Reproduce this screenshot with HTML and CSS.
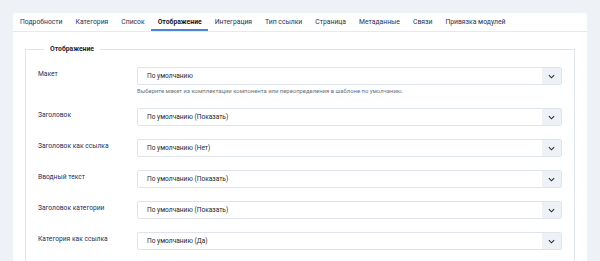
FILE: index.html
```html
<!DOCTYPE html>
<html lang="ru">
<head>
<meta charset="utf-8">
<title>Отображение</title>
<link rel="stylesheet" href="styles.css">
</head>
<body>
<div class="card">
  <nav class="tabs">
    <span class="tab">Подробности</span>
    <span class="tab">Категория</span>
    <span class="tab">Список</span>
    <span class="tab active">Отображение</span>
    <span class="tab">Интеграция</span>
    <span class="tab">Тип ссылки</span>
    <span class="tab">Страница</span>
    <span class="tab">Метаданные</span>
    <span class="tab">Связи</span>
    <span class="tab">Привязка модулей</span>
  </nav>
  <div class="card-body">
    <fieldset class="group">
      <legend class="legend">Отображение</legend>
      <div class="row">
        <div class="label">Макет</div>
        <div class="control">
          <div class="select"><span class="value">По умолчанию</span><span class="btn"><svg viewBox="0 0 8 5" width="7" height="5"><path d="M1 1 L4 4 L7 1" fill="none" stroke="#2b2f36" stroke-width="1.3"/></svg></span></div>
          <div class="help">Выберите макет из комплектации компонента или переопределения в шаблоне по умолчанию.</div>
        </div>
      </div>
      <div class="row">
        <div class="label">Заголовок</div>
        <div class="control">
          <div class="select"><span class="value">По умолчанию (Показать)</span><span class="btn"><svg viewBox="0 0 8 5" width="7" height="5"><path d="M1 1 L4 4 L7 1" fill="none" stroke="#2b2f36" stroke-width="1.3"/></svg></span></div>
        </div>
      </div>
      <div class="row">
        <div class="label">Заголовок как ссылка</div>
        <div class="control">
          <div class="select"><span class="value">По умолчанию (Нет)</span><span class="btn"><svg viewBox="0 0 8 5" width="7" height="5"><path d="M1 1 L4 4 L7 1" fill="none" stroke="#2b2f36" stroke-width="1.3"/></svg></span></div>
        </div>
      </div>
      <div class="row">
        <div class="label">Вводный текст</div>
        <div class="control">
          <div class="select"><span class="value">По умолчанию (Показать)</span><span class="btn"><svg viewBox="0 0 8 5" width="7" height="5"><path d="M1 1 L4 4 L7 1" fill="none" stroke="#2b2f36" stroke-width="1.3"/></svg></span></div>
        </div>
      </div>
      <div class="row">
        <div class="label">Заголовок категории</div>
        <div class="control">
          <div class="select"><span class="value">По умолчанию (Показать)</span><span class="btn"><svg viewBox="0 0 8 5" width="7" height="5"><path d="M1 1 L4 4 L7 1" fill="none" stroke="#2b2f36" stroke-width="1.3"/></svg></span></div>
        </div>
      </div>
      <div class="row">
        <div class="label">Категория как ссылка</div>
        <div class="control">
          <div class="select"><span class="value">По умолчанию (Да)</span><span class="btn"><svg viewBox="0 0 8 5" width="7" height="5"><path d="M1 1 L4 4 L7 1" fill="none" stroke="#2b2f36" stroke-width="1.3"/></svg></span></div>
        </div>
      </div>
    </fieldset>
  </div>
</div>
</body>
</html>
```
FILE: styles.css
```css
html, body {
  margin: 0;
  padding: 0;
}
body {
  background: #eef2f7;
  font-family: Roboto, "Noto Sans", sans-serif;
  padding: 13px 13px 0 13px;
  height: 261px;
  box-sizing: border-box;
  overflow: hidden;
}
.card {
  background: #fff;
  width: 574px;
  border-radius: 3px 3px 0 0;
  height: 300px;
}
.tabs {
  display: flex;
  height: 18px;
  border-bottom: 1px solid #e6eaf0;
  padding-left: 0.5px;
}
.tab {
  display: flex;
  align-items: center;
  padding: 0 6.5px;
  font-size: 6.8px;
  color: #1f3355;
  box-sizing: border-box;
  border-bottom: 2px solid transparent;
  padding-top: 1px;
}
.tab.active {
  color: #111827;
  font-weight: 700;
  border-bottom-color: #4a86d3;
}
.card-body {
  padding: 12px 12px 0 12px;
}
.group {
  margin: 0;
  border: 1px solid #dfe4eb;
  padding: 13px 12px 0 12px;
  min-width: 0;
}
.legend {
  margin-left: 6px;
  padding: 0 6px;
  font-size: 6.8px;
  line-height: 10px;
  font-weight: 700;
  color: #1d2530;
}
.row {
  display: flex;
  margin-bottom: 13px;
}
.label {
  width: 99px;
  flex: none;
  font-size: 6.7px;
  line-height: 10px;
  padding-top: 2px;
  color: #1c3260;
}
.control {
  flex: 1;
}
.select {
  display: flex;
  height: 18px;
  border: 1px solid #dfe4ec;
  border-radius: 2px;
  box-sizing: border-box;
  align-items: stretch;
  background: #fff;
}
.value {
  flex: 1;
  display: flex;
  align-items: center;
  padding-left: 9px;
  font-size: 6.6px;
  color: #22262a;
}
.btn {
  width: 19px;
  background: #eef1f6;
  display: flex;
  align-items: center;
  justify-content: center;
}
.help {
  margin-top: 2px;
  font-size: 5.9px;
  line-height: 8px;
  color: #6b7178;
  margin-bottom: 0;
}
```
